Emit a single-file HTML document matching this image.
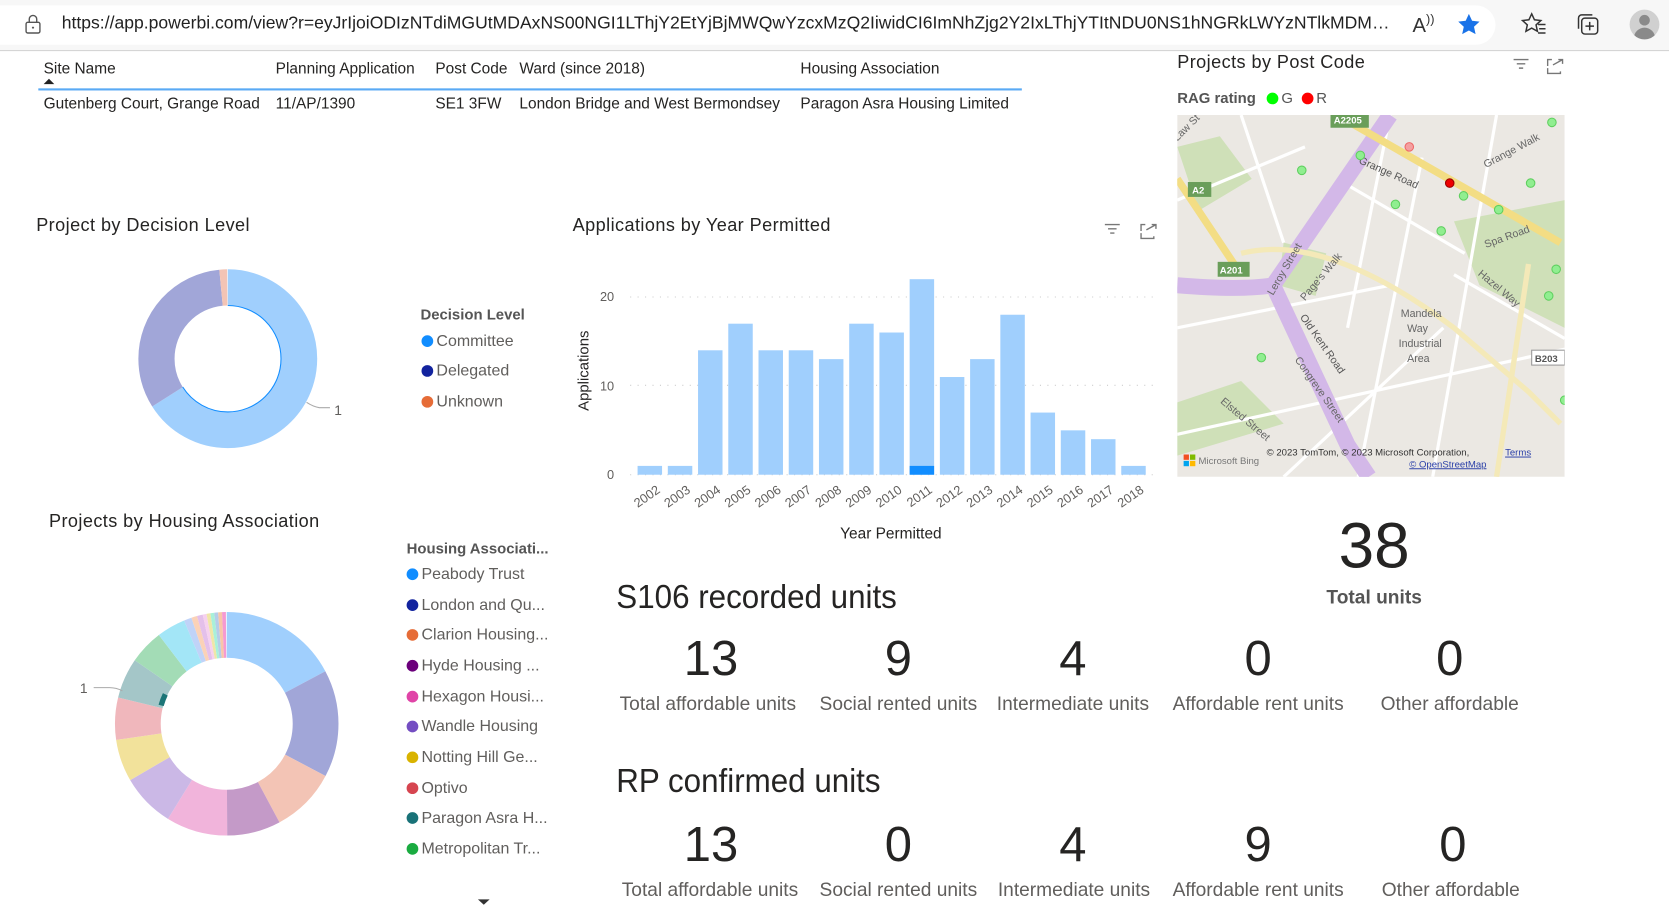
<!DOCTYPE html>
<html><head><meta charset="utf-8"><style>
html,body{margin:0;padding:0;width:1669px;height:913px;overflow:hidden;background:#fff}
#w{position:absolute;left:0;top:0;width:1568px;height:858px;transform:scale(1.06441);transform-origin:0 0;font-family:"Liberation Sans",sans-serif;color:#252423}
.a{position:absolute;white-space:nowrap}
.t{font-size:17px;letter-spacing:.4px;color:#252423}
.big{font-size:46px;text-align:center;width:200px;color:#252423}
.lbl{font-size:18px;text-align:center;width:200px;color:#605e5c}
.dot{display:inline-block;width:11px;height:11px;border-radius:50%;margin-right:3px;vertical-align:-1px}
.leg{font-size:15px;color:#605e5c}
</style></head><body><div id="w">
<div class="a" style="left:0;top:0;width:1568px;height:47px;background:#f7f7f7;border-bottom:1px solid #d4d4d4"></div>
<div class="a" style="left:0;top:5px;width:1405px;height:37px;background:#fff;border-radius:0 19px 19px 0"></div>
<svg class="a" style="left:22px;top:13px" width="18" height="20" viewBox="0 0 18 20"><rect x="2.5" y="8" width="13" height="10" rx="1.5" fill="none" stroke="#555" stroke-width="1.3"/><path d="M5.5 8V5a3.5 3.5 0 0 1 7 0v3" fill="none" stroke="#555" stroke-width="1.3"/><circle cx="9" cy="13" r="1" fill="#555"/></svg>
<div class="a" style="left:58px;top:13px;width:1250px;overflow:hidden;text-overflow:ellipsis;font-size:16.5px;color:#222">https://app.powerbi.com/view?r=eyJrIjoiODIzNTdiMGUtMDAxNS00NGI1LThjY2EtYjBjMWQwYzcxMzQ2IiwidCI6ImNhZjg2Y2IxLThjYTItNDU0NS1hNGRkLWYzNTlkMDM5MGEzZmQiLCJjIjo4fQ</div>
<div class="a" style="left:1327px;top:11px;font-size:19px;color:#333">A<span style="font-size:12px;vertical-align:8px">))</span></div>
<svg class="a" style="left:1368px;top:11px" width="24" height="24" viewBox="0 0 24 24"><path d="M12 2l3 6.5 7 .8-5.2 4.8 1.5 7L12 17.6 5.7 21.1l1.5-7L2 9.3l7-.8z" fill="#1a73e8"/></svg>
<svg class="a" style="left:1428px;top:11px" width="26" height="24" viewBox="0 0 26 24"><path d="M11 2l2.6 5.6 6 .7-4.5 4.1 1.3 6L11 15.4 5.6 18.4l1.3-6L2.4 8.3l6-.7z" fill="none" stroke="#333" stroke-width="1.4"/><path d="M17 12h7M18 16h6M17 20h7" stroke="#333" stroke-width="1.4"/></svg>
<svg class="a" style="left:1480px;top:11px" width="24" height="24" viewBox="0 0 24 24"><rect x="6" y="6" width="15" height="15" rx="3" fill="none" stroke="#333" stroke-width="1.4"/><path d="M3 16V6a3 3 0 0 1 3-3h10" fill="none" stroke="#333" stroke-width="1.4"/><path d="M13.5 9.5v8M9.5 13.5h8" stroke="#333" stroke-width="1.4"/></svg>
<div class="a" style="left:1531px;top:9px;width:28px;height:28px;border-radius:50%;background:#d0d0d0;overflow:hidden"><div style="position:absolute;left:9px;top:5px;width:10px;height:10px;border-radius:50%;background:#8a8a8a"></div><div style="position:absolute;left:4px;top:17px;width:20px;height:14px;border-radius:10px 10px 0 0;background:#8a8a8a"></div></div>

<div class="a" style="left:41px;top:57px;font-size:14.5px">Site Name</div>
<div class="a" style="left:41px;top:74px;width:0;height:0;border-left:5px solid transparent;border-right:5px solid transparent;border-bottom:5px solid #222"></div>
<div class="a" style="left:259px;top:57px;font-size:14.5px">Planning Application</div>
<div class="a" style="left:409px;top:57px;font-size:14.5px">Post Code</div>
<div class="a" style="left:488px;top:57px;font-size:14.5px">Ward (since 2018)</div>
<div class="a" style="left:752px;top:57px;font-size:14.5px">Housing Association</div>
<div class="a" style="left:36px;top:83px;width:924px;height:2px;background:#5aaaf5"></div>
<div class="a" style="left:41px;top:90px;font-size:14.5px">Gutenberg Court, Grange Road</div>
<div class="a" style="left:259px;top:90px;font-size:14.5px">11/AP/1390</div>
<div class="a" style="left:409px;top:90px;font-size:14.5px">SE1 3FW</div>
<div class="a" style="left:488px;top:90px;font-size:14.5px">London Bridge and West Bermondsey</div>
<div class="a" style="left:752px;top:90px;font-size:14.5px">Paragon Asra Housing Limited</div>

<div class="a t" style="left:34px;top:202px">Project by Decision Level</div>
<svg class="a" style="left:0;top:0" width="560" height="860">
<g transform="translate(214,337) rotate(-90)">
<circle r="67" fill="none" stroke="#a0cffd" stroke-width="34" pathLength="360" stroke-dasharray="238 400"/>
<circle r="67" fill="none" stroke="#a1a6d8" stroke-width="34" pathLength="360" stroke-dasharray="0 238 117 400"/>
<circle r="67" fill="none" stroke="#f3c4b5" stroke-width="34" pathLength="360" stroke-dasharray="0 355 5 400"/>
<circle r="50" fill="none" stroke="#118dff" stroke-width="1" pathLength="360" stroke-dasharray="238 400"/>
</g>
<path d="M288 378q6 4 12 5h10" fill="none" stroke="#aaa"/>
<text x="314" y="390" font-size="13" fill="#605e5c" font-family="Liberation Sans">1</text>
<g transform="translate(213,680) rotate(-90)" fill="none" stroke-width="43">
<circle r="83.5" stroke="#a0cffd" pathLength="360" stroke-dasharray="62 400"/>
<circle r="83.5" stroke="#a1a6d8" pathLength="360" stroke-dasharray="0 62 56 400"/>
<circle r="83.5" stroke="#f3c4b5" pathLength="360" stroke-dasharray="0 118 34 400"/>
<circle r="83.5" stroke="#c49ac8" pathLength="360" stroke-dasharray="0 152 28 400"/>
<circle r="83.5" stroke="#f1b4db" pathLength="360" stroke-dasharray="0 180 32 400"/>
<circle r="83.5" stroke="#cbb8e6" pathLength="360" stroke-dasharray="0 212 28 400"/>
<circle r="83.5" stroke="#f2e29b" pathLength="360" stroke-dasharray="0 240 22 400"/>
<circle r="83.5" stroke="#f0b7bc" pathLength="360" stroke-dasharray="0 262 22 400"/>
<circle r="83.5" stroke="#a4c6c8" pathLength="360" stroke-dasharray="0 284 21 400"/>
<circle r="83.5" stroke="#a3dcb6" pathLength="360" stroke-dasharray="0 305 18 400"/>
<circle r="83.5" stroke="#a3e6f7" pathLength="360" stroke-dasharray="0 323 15 400"/>
<circle r="83.5" stroke="#c0d3f8" pathLength="360" stroke-dasharray="0 338 4 400"/>
<circle r="83.5" stroke="#fbd2b8" pathLength="360" stroke-dasharray="0 342 3 400"/>
<circle r="83.5" stroke="#e4c0ea" pathLength="360" stroke-dasharray="0 345 3 400"/>
<circle r="83.5" stroke="#f6d1ee" pathLength="360" stroke-dasharray="0 348 2 400"/>
<circle r="83.5" stroke="#f0e6a8" pathLength="360" stroke-dasharray="0 350 2 400"/>
<circle r="83.5" stroke="#a9f0d9" pathLength="360" stroke-dasharray="0 352 2 400"/>
<circle r="83.5" stroke="#b5cde8" pathLength="360" stroke-dasharray="0 354 2 400"/>
<circle r="83.5" stroke="#f8c6a8" pathLength="360" stroke-dasharray="0 356 2 400"/>
<circle r="83.5" stroke="#f59ad2" pathLength="360" stroke-dasharray="0 358 2 400"/>
<circle r="64" stroke="#1c7577" stroke-width="5" pathLength="360" stroke-dasharray="0 286 10 400"/>
</g>
<path d="M88 646h15q6 0 12 3" fill="none" stroke="#aaa"/>
<text x="75" y="651" font-size="13" fill="#605e5c" font-family="Liberation Sans">1</text>
<path d="M449 845h11l-5.5 5z" fill="#333"/>
</svg>
<div class="a" style="left:395px;top:287px;font-size:14px;font-weight:bold;color:#555">Decision Level</div>
<div class="a leg" style="left:396px;top:312px"><span class="dot" style="background:#118dff"></span>Committee</div>
<div class="a leg" style="left:396px;top:340px"><span class="dot" style="background:#12239e"></span>Delegated</div>
<div class="a leg" style="left:396px;top:369px"><span class="dot" style="background:#e66c37"></span>Unknown</div>

<div class="a t" style="left:46px;top:480px">Projects by Housing Association</div>
<div class="a" style="left:382px;top:507px;font-size:14px;font-weight:bold;color:#555">Housing Associati...</div>
<div class="a leg" style="left:382px;top:531px"><span class="dot" style="background:#118dff"></span>Peabody Trust</div>
<div class="a leg" style="left:382px;top:560px"><span class="dot" style="background:#12239e"></span>London and Qu...</div>
<div class="a leg" style="left:382px;top:588px"><span class="dot" style="background:#e66c37"></span>Clarion Housing...</div>
<div class="a leg" style="left:382px;top:617px"><span class="dot" style="background:#6b007b"></span>Hyde Housing ...</div>
<div class="a leg" style="left:382px;top:646px"><span class="dot" style="background:#e044a7"></span>Hexagon Housi...</div>
<div class="a leg" style="left:382px;top:674px"><span class="dot" style="background:#744ec2"></span>Wandle Housing</div>
<div class="a leg" style="left:382px;top:703px"><span class="dot" style="background:#d9b300"></span>Notting Hill Ge...</div>
<div class="a leg" style="left:382px;top:732px"><span class="dot" style="background:#d64550"></span>Optivo</div>
<div class="a leg" style="left:382px;top:760px"><span class="dot" style="background:#197278"></span>Paragon Asra H...</div>
<div class="a leg" style="left:382px;top:789px"><span class="dot" style="background:#1aab40"></span>Metropolitan Tr...</div>

<div class="a t" style="left:538px;top:202px">Applications by Year Permitted</div>
<svg class="a" style="left:530px;top:200px" width="570" height="320" font-family="Liberation Sans">
<g stroke="#777" stroke-width="1.3" fill="none">
<path d="M508 11h14M511 15h8M513 19h4"/>
<path d="M542 17v-6h4M552 11h4v4M547 16l9-5M542 19v5h12v-2"/>
</g>
<g stroke="#ccc" stroke-dasharray="1 6"><path d="M62 79h495M62 162h495M62 246h495"/></g>
<g font-size="12" fill="#605e5c" text-anchor="end"><text x="47" y="83">20</text><text x="47" y="167">10</text><text x="47" y="250">0</text></g>
<text transform="translate(23,186) rotate(-90)" font-size="14" fill="#252423">Applications</text>
<g fill="#a0cffd" id="bars"></g>
<text x="307" y="306" font-size="14.5" fill="#252423" text-anchor="middle">Year Permitted</text>
<g id="yrs" font-size="12" fill="#605e5c"></g>
</svg>

<div class="a t" style="left:1106px;top:49px">Projects by Post Code</div>
<svg class="a" style="left:1418px;top:52px" width="56" height="22"><g stroke="#777" stroke-width="1.3" fill="none"><path d="M4 4h14M7 8h8M9 12h4"/><path d="M36 10v-6h4M46 4h4v4M41 9l9-5M36 12v5h12v-2"/></g></svg>
<div class="a" style="left:1106px;top:84px;font-size:14px;font-weight:bold;color:#555">RAG rating <span class="dot" style="background:#0f0;margin-left:6px"></span><span style="font-weight:normal">G</span> <span class="dot" style="background:#f00;margin-left:4px"></span><span style="font-weight:normal">R</span></div>
<svg class="a" style="left:1106px;top:108px" width="364" height="340" viewBox="0 0 364 340" font-family="Liberation Sans">
<rect width="364" height="340" fill="#ebe8e3"/>
<g fill="#cfe0b8"><path d="M0 30l40 -10 30 40-50 30z"/><path d="M260 100l104 -20v120l-80 -40z"/><path d="M0 270l60-20 40 40-100 30z"/><path d="M100 120l40 10-10 40-35-10z"/></g>
<g stroke="#fff" stroke-width="3" fill="none"><path d="M0 80l120 -50M60 0l40 120M150 60l120 70M200 0l-40 200M230 40l-60 300M300 0l-60 340M0 200l200 -40M0 300l364 -80M100 340l150-140M260 150l104 60"/></g>
<path d="M0 160q60 5 90 0l70 150 20 30M90 160L200 0" stroke="#d3b8e8" stroke-width="15" fill="none"/>
<path d="M0 60l60 90M150 0l210 120" stroke="#f3dd84" stroke-width="7" fill="none"/>
<path d="M60 130q80-20 200 70l70 60 30 30M330 140l-30 200" stroke="#f4e9b8" stroke-width="5" fill="none"/>
<g font-size="10" fill="#666"><text x="210" y="190">Mandela</text><text x="216" y="204">Way</text><text x="208" y="218">Industrial</text><text x="216" y="232">Area</text>
<text transform="translate(170,45) rotate(24)" fill="#555">Grange Road</text><text transform="translate(115,190) rotate(55)" fill="#555">Old Kent Road</text><text transform="translate(290,50) rotate(-28)">Grange Walk</text><text transform="translate(90,170) rotate(-60)">Leroy Street</text><text transform="translate(120,175) rotate(-50)">Page's Walk</text><text transform="translate(290,125) rotate(-20)">Spa Road</text><text transform="translate(282,150) rotate(40)">Hazel Way</text><text transform="translate(0,25) rotate(-45)">Law St</text><text transform="translate(40,270) rotate(40)">Elsted Street</text><text transform="translate(110,230) rotate(55)">Congreve Street</text></g>
<g font-size="9" font-weight="bold" fill="#fff"><rect x="10" y="63" width="22" height="14" fill="#6a9e5a"/><text x="14" y="74">A2</text><rect x="38" y="138" width="30" height="14" fill="#6a9e5a"/><text x="40" y="149">A201</text><rect x="144" y="-2" width="36" height="14" fill="#6a9e5a"/><text x="147" y="8">A2205</text><rect x="333" y="221" width="31" height="14" fill="#fff" stroke="#999"/><text x="336" y="232" fill="#555">B203</text></g>
<g fill="#90ee90" stroke="#5fcf5f"><circle cx="172" cy="38" r="4"/><circle cx="117" cy="52" r="4"/><circle cx="205" cy="84" r="4"/><circle cx="248" cy="109" r="4"/><circle cx="269" cy="76" r="4"/><circle cx="302" cy="89" r="4"/><circle cx="332" cy="64" r="4"/><circle cx="352" cy="7" r="4"/><circle cx="356" cy="145" r="4"/><circle cx="349" cy="170" r="4"/><circle cx="79" cy="228" r="4"/><circle cx="364" cy="268" r="4"/></g>
<circle cx="218" cy="30" r="4" fill="#f4a0a0" stroke="#e66"/><circle cx="256" cy="64" r="4" fill="#e00" stroke="#900"/>
<g font-size="9" fill="#333"><text x="84" y="320">© 2023 TomTom, © 2023 Microsoft Corporation,</text><text x="308" y="320" fill="#2a3fa8" text-decoration="underline">Terms</text><text x="218" y="331" fill="#2a3fa8" text-decoration="underline">© OpenStreetMap</text><text x="20" y="328" fill="#777">Microsoft Bing</text></g>
<g><rect x="6" y="319" width="5" height="5" fill="#f25022"/><rect x="12" y="319" width="5" height="5" fill="#7fba00"/><rect x="6" y="325" width="5" height="5" fill="#00a4ef"/><rect x="12" y="325" width="5" height="5" fill="#ffb900"/></g>
</svg>

<div class="a" style="left:1191px;top:478px;width:200px;text-align:center;font-size:60px;color:#252423">38</div>
<div class="a" style="left:1191px;top:551px;width:200px;text-align:center;font-size:18px;font-weight:bold;color:#555">Total units</div>
<div class="a" style="left:579px;top:543px;font-size:31px;transform:scaleX(.95);transform-origin:0 0">S106 recorded units</div>
<div class="a" style="left:579px;top:716px;font-size:31px;transform:scaleX(.95);transform-origin:0 0">RP confirmed units</div>
<div class="a big" style="left:568px;top:591px">13</div><div class="a big" style="left:744px;top:591px">9</div><div class="a big" style="left:908px;top:591px">4</div><div class="a big" style="left:1082px;top:591px">0</div><div class="a big" style="left:1262px;top:591px">0</div>
<div class="a lbl" style="left:565px;top:651px">Total affordable units</div><div class="a lbl" style="left:744px;top:651px">Social rented units</div><div class="a lbl" style="left:908px;top:651px">Intermediate units</div><div class="a lbl" style="left:1082px;top:651px">Affordable rent units</div><div class="a lbl" style="left:1262px;top:651px">Other affordable</div>
<div class="a big" style="left:568px;top:766px">13</div><div class="a big" style="left:744px;top:766px">0</div><div class="a big" style="left:908px;top:766px">4</div><div class="a big" style="left:1082px;top:766px">9</div><div class="a big" style="left:1265px;top:766px">0</div>
<div class="a lbl" style="left:567px;top:826px">Total affordable units</div><div class="a lbl" style="left:744px;top:826px">Social rented units</div><div class="a lbl" style="left:909px;top:826px">Intermediate units</div><div class="a lbl" style="left:1082px;top:826px">Affordable rent units</div><div class="a lbl" style="left:1263px;top:826px">Other affordable</div>
</div>
<script>
var v=[1,1,14,17,14,14,13,17,16,22,11,13,18,7,5,4,1],b='',y='';
for(var i=0;i<17;i++){var x=69+i*28.4,h=v[i]*8.35;b+='<rect x="'+x.toFixed(1)+'" y="'+(246-h).toFixed(1)+'" width="23" height="'+h.toFixed(1)+'"/>';
if(i==9)b+='<rect x="'+x.toFixed(1)+'" y="237.7" width="23" height="8.3" fill="#118dff"/>';
y+='<text transform="translate('+(x+22).toFixed(1)+',262) rotate(-35)" text-anchor="end">'+(2002+i)+'</text>';}
document.getElementById('bars').innerHTML=b;document.getElementById('yrs').innerHTML=y;
</script>
</body></html>
